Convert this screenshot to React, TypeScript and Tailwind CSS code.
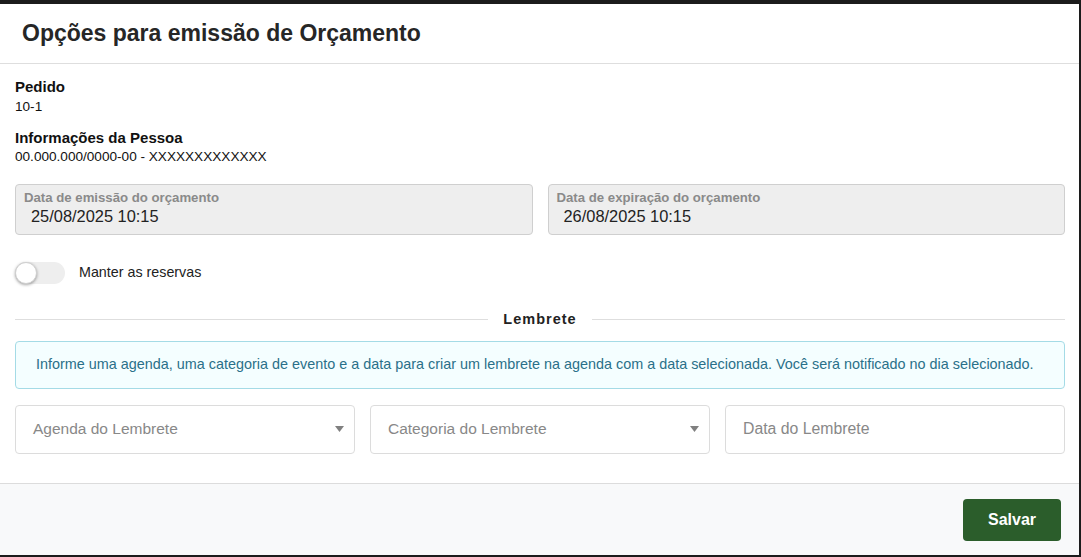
import React from "react";

function Select({ label }: { label: string }) {
  return (
    <div className="flex h-[49px] items-center justify-between rounded-[4px] border border-[#dcdcdc] bg-white pl-[17px] pr-[10px]">
      <span className="text-[15.5px] leading-[20px] text-[#888]">{label}</span>
      <svg width="9" height="6" viewBox="0 0 9 6" className="block">
        <path d="M0 0 H9 L4.5 6 Z" fill="#808080" />
      </svg>
    </div>
  );
}

function DateBox({ label, value }: { label: string; value: string }) {
  return (
    <div className="flex h-[51px] flex-col rounded-[4px] border border-[#cfcfcf] bg-[#eeeeee] pl-[8px] pt-[5px]">
      <span className="text-[13.2px] font-bold leading-[16px] text-[#8a8a8a]">{label}</span>
      <span className="pl-[7px] text-[16.4px] leading-[20px] text-[#222]">{value}</span>
    </div>
  );
}

export default function App() {
  return (
    <div
      className="flex h-[557px] w-[1081px] flex-col border-t-[4px] border-r-[2px] border-b-[2px] border-[#1c1c1c] bg-white"
      style={{ fontFamily: '"Liberation Sans", Arial, sans-serif' }}
    >
      <div className="flex h-[60px] items-center border-b border-[#dedede] pl-[22px]">
        <h1 className="text-[23px] font-bold text-[#262626]">Opções para emissão de Orçamento</h1>
      </div>
      <div className="flex flex-1 flex-col pl-[15px] pr-[14px]">
        <div className="mt-[14px] text-[15px] font-bold leading-[17px] text-[#111]">Pedido</div>
        <div className="mt-[4px] text-[13.6px] leading-[16px] text-[#111]">10-1</div>
        <div className="mt-[14px] text-[15px] font-bold leading-[17px] text-[#111]">Informações da Pessoa</div>
        <div className="mt-[3px] text-[13.6px] leading-[16px] text-[#111]">00.000.000/0000-00 - XXXXXXXXXXXXX</div>
        <div className="mt-[19px] grid grid-cols-2 gap-[15px]">
          <DateBox label="Data de emissão do orçamento" value="25/08/2025 10:15" />
          <DateBox label="Data de expiração do orçamento" value="26/08/2025 10:15" />
        </div>
        <div className="mt-[27px] flex items-center">
          <div className="relative h-[22px] w-[50px] rounded-full bg-[#eeeeee]">
            <div className="absolute left-0 top-0 h-[22px] w-[22px] rounded-full border border-[#d0d0d0] bg-white shadow-[0_1px_3px_rgba(0,0,0,0.35)]" />
          </div>
          <span className="ml-[14px] text-[14.3px] text-[#222]">Manter as reservas</span>
        </div>
        <div className="mt-[25px] flex items-center">
          <div className="h-px flex-1 bg-[#dedede]" />
          <span className="px-[15px] text-[14.5px] font-bold tracking-[1px] text-[#222]">Lembrete</span>
          <div className="h-px flex-1 bg-[#dedede]" />
        </div>
        <div className="mt-[10px] flex h-[48px] items-center rounded-[4px] border border-[#a4dbe6] bg-[#f4feff] pl-[20px] text-[14.4px] text-[#2a7089]">
          Informe uma agenda, uma categoria de evento e a data para criar um lembrete na agenda com a data selecionada. Você será notificado no dia selecionado.
        </div>
        <div className="mt-[16px] grid grid-cols-3 gap-[15px]">
          <Select label="Agenda do Lembrete" />
          <Select label="Categoria do Lembrete" />
          <div className="flex h-[49px] items-center rounded-[4px] border border-[#dcdcdc] bg-white pl-[17px]">
            <span className="text-[15.8px] leading-[20px] text-[#888]">Data do Lembrete</span>
          </div>
        </div>
      </div>
      <div className="flex h-[72px] items-center justify-end border-t border-[#dcdcdc] bg-[#f8f9fa] pr-[18px]">
        <button className="h-[42px] w-[98px] rounded-[4px] bg-[#2b5d2b] text-[16px] font-bold text-white">Salvar</button>
      </div>
    </div>
  );
}
